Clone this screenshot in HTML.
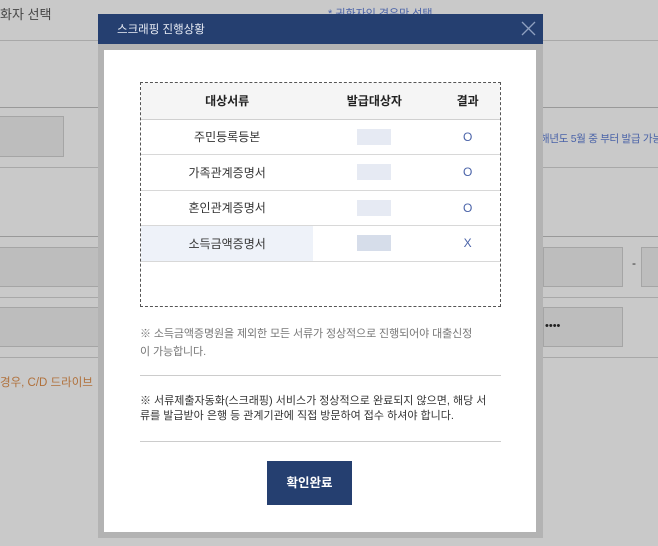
<!DOCTYPE html>
<html><head><meta charset="utf-8"><style>
*{margin:0;padding:0;box-sizing:border-box}
body{width:658px;height:546px;overflow:hidden;background:#c9c9c9;font-family:"Liberation Sans","Noto Sans CJK KR",sans-serif;position:relative}
.a{position:absolute}
.hl{position:absolute;left:0;width:658px;height:1px;background:#a8a8a8}
.box{position:absolute;background:#bdbdbd;border:1px solid #a5a5a5}
.t{position:absolute;font-size:12px}
td{font-size:12px;color:#333;text-align:center;height:35.5px;border-bottom:1px solid #d8d8d8}
th{font-size:12px;color:#222;height:36px;background:#f5f5f5;border-bottom:1px solid #d0d0d0}
.b{display:inline-block;width:34px;height:16px;background:#e6eaf3;vertical-align:middle}
</style></head><body>
<div class="t" style="left:0;top:4px;font-size:13px;color:#444">화자 선택</div>
<div class="t" style="left:328px;top:5px;font-size:11px;color:#4a63a8">* 귀화자인 경우만 선택</div>
<div class="hl" style="top:40px"></div>
<div class="hl" style="top:107px;background:#999"></div>
<div class="hl" style="top:167px"></div>
<div class="hl" style="top:236px;background:#999"></div>
<div class="hl" style="top:297px"></div>
<div class="hl" style="top:357px"></div>
<div class="box" style="left:-2px;top:116px;width:66px;height:41px"></div>
<div class="t" style="left:540px;top:131px;font-size:10.5px;color:#4a63a8;white-space:nowrap;letter-spacing:-0.3px">해년도 5월 중 부터 발급 가능</div>
<div class="box" style="left:-2px;top:247px;width:102px;height:40px"></div>
<div class="box" style="left:543px;top:247px;width:80px;height:40px"></div>
<div class="t" style="left:632px;top:256px;color:#333">-</div>
<div class="box" style="left:641px;top:247px;width:20px;height:40px"></div>
<div class="box" style="left:-2px;top:307px;width:102px;height:40px"></div>
<div class="box" style="left:543px;top:307px;width:80px;height:40px"></div>
<div class="t" style="left:545px;top:320px;color:#222;font-size:11px">••••</div>
<div class="t" style="left:0;top:374px;color:#b0703a;font-size:11.5px;white-space:nowrap">경우, C/D 드라이브</div>

<div class="a" style="left:98px;top:14px;width:445px;height:524px;background:#b3b3b3"></div>
<div class="a" style="left:98px;top:14px;width:445px;height:30px;background:#253f70"></div>
<div class="t" style="left:117px;top:21px;color:#e8ecf5;font-size:11.5px">스크래핑 진행상황</div>
<svg class="a" style="left:521px;top:21px" width="15" height="15"><path d="M1 1L14 14M14 1L1 14" stroke="#8fa0c0" stroke-width="1.3"/></svg>
<div class="a" style="left:104px;top:50px;width:432px;height:482px;background:#fff"></div>
<div class="a" style="left:140px;top:82px;width:361px;height:225px;border:1px dashed #555">
<table style="width:100%;border-collapse:collapse">
<tr><th style="width:48%">대상서류</th><th style="width:34%">발급대상자</th><th>결과</th></tr>
<tr><td>주민등록등본</td><td><span class="b"></span></td><td style="color:#4a63a8">O</td></tr>
<tr><td>가족관계증명서</td><td><span class="b"></span></td><td style="color:#4a63a8">O</td></tr>
<tr><td>혼인관계증명서</td><td><span class="b"></span></td><td style="color:#4a63a8">O</td></tr>
<tr><td style="background:#eef2f9">소득금액증명서</td><td><span class="b" style="background:#d6ddea"></span></td><td style="color:#4a63a8">X</td></tr>
</table></div>
<div class="t" style="left:140px;top:325px;width:362px;color:#777;font-size:11px;line-height:18px;letter-spacing:-0.1px">※ 소득금액증명원을 제외한 모든 서류가 정상적으로 진행되어야 대출신정<br>이 가능합니다.</div>
<div class="a" style="left:140px;top:375px;width:361px;height:1px;background:#ccc"></div>
<div class="t" style="left:140px;top:394px;width:365px;color:#333;font-size:11px;line-height:15px">※ 서류제출자동화(스크래핑) 서비스가 정상적으로 완료되지 않으면, 해당 서<br>류를 발급받아 은행 등 관계기관에 직접 방문하여 접수 하셔야 합니다.</div>
<div class="a" style="left:140px;top:441px;width:361px;height:1px;background:#ccc"></div>
<div class="a" style="left:267px;top:461px;width:85px;height:44px;background:#253f70;color:#fff;font-size:12.5px;font-weight:bold;text-align:center;line-height:44px">확인완료</div>
</body></html>
